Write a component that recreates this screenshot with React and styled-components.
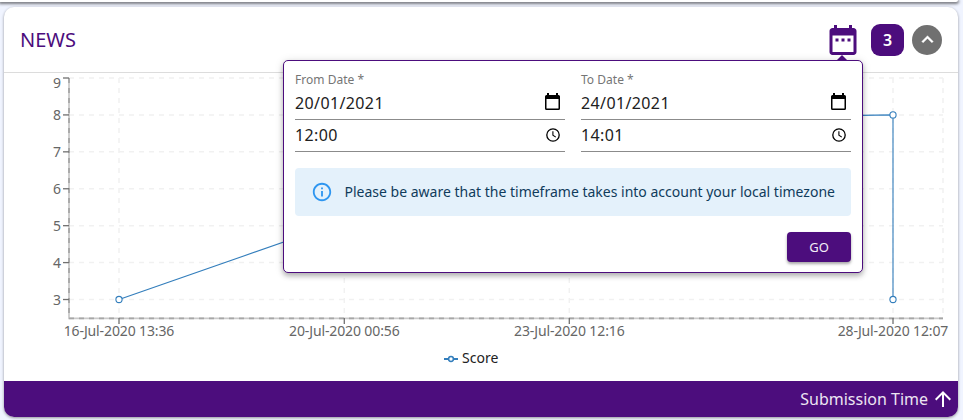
import React from "react";
import styled, { createGlobalStyle } from "styled-components";

const purple = "#4c0d7d";

const GlobalStyle = createGlobalStyle`
  * { box-sizing: border-box; }
  body {
    margin: 0;
    background: #f0f4ff;
    font-family: "Noto Sans", sans-serif;
    overflow: hidden;
  }
`;

const Page = styled.main`
  width: 963px;
  height: 420px;
  overflow: hidden;
  display: flex;
  flex-direction: column;
  gap: 5px;
`;

const PreviousCard = styled.div`
  flex: none;
  height: 2px;
  width: 958px;
  background: #fff;
  border-radius: 0 0 10px 0;
  box-shadow: 0 1px 3px 1px rgba(0, 0, 0, 0.5);
`;

const Card = styled.section`
  position: relative;
  width: 954px;
  height: 410px;
  margin-left: 4px;
  display: flex;
  flex-direction: column;
  background: #fff;
  border-radius: 10px;
  box-shadow: 0 1px 3px rgba(0, 0, 0, 0.4);
`;

const Header = styled.header`
  height: 66px;
  padding: 0 16px;
  display: flex;
  align-items: center;
  border-bottom: 1px solid #dcdcdc;
`;

const Title = styled.h2`
  flex: 1;
  margin: 0;
  color: ${purple};
  font-size: 20px;
  font-weight: 400;
  line-height: 28px;
`;

const Actions = styled.div`
  display: flex;
  align-items: center;
`;

const IconButton = styled.button`
  display: flex;
  padding: 0;
  margin-right: 10.5px;
  border: 0;
  background: none;
  color: ${purple};
`;

const Count = styled.span`
  width: 33px;
  height: 32px;
  margin-right: 8px;
  border-radius: 9px;
  background: ${purple};
  color: #fff;
  font-size: 16px;
  font-weight: 600;
  line-height: 33px;
  text-align: center;
`;

const CollapseButton = styled.button`
  display: flex;
  align-items: center;
  justify-content: center;
  width: 30px;
  height: 30px;
  padding: 0;
  border: 0;
  border-radius: 50%;
  background: #707070;
  color: #fff;
`;

const ChartSvg = styled.svg`
  display: block;
  flex: none;
  font-family: "Noto Sans", sans-serif;
  font-size: 14px;
`;

const DateTick = styled.text`
  letter-spacing: -0.12px;
`;

const Legend = styled.div`
  height: 36px;
  padding: 3px 0 0 440px;
  display: flex;
  align-items: flex-start;
  gap: 4px;
  color: #212121;
  font-size: 14px;
  line-height: 20px;
`;

const LegendMark = styled.svg`
  margin-top: 4px;
`;

const Footer = styled.footer`
  height: 36px;
  padding-right: 3px;
  display: flex;
  align-items: center;
  justify-content: flex-end;
  gap: 3px;
  border-radius: 0 0 10px 10px;
  background: ${purple};
  color: #ece4f2;
  font-size: 16px;
`;

const Popover = styled.div`
  position: absolute;
  left: 279px;
  top: 53px;
  width: 580px;
  height: 213px;
  padding: 10px 11px;
  display: flex;
  flex-direction: column;
  background: #fff;
  border: 1px solid ${purple};
  border-radius: 5px;
  box-shadow: 0 3px 5px rgba(0, 0, 0, 0.25), 0 1px 10px rgba(0, 0, 0, 0.12);

  &::before {
    content: "";
    position: absolute;
    left: 553px;
    top: -6px;
    border: 5px solid transparent;
    border-top: 0;
    border-bottom-color: ${purple};
  }
`;

const Fields = styled.div`
  display: grid;
  grid-template-columns: 1fr 1fr;
  column-gap: 16px;
`;

const Field = styled.div`
  display: flex;
  flex-direction: column;
`;

const Label = styled.span`
  height: 17px;
  color: #757575;
  font-size: 12px;
  line-height: 18px;
  letter-spacing: 0.02px;
`;

const Input = styled.div`
  height: 32px;
  padding: 0 4px 1px 0;
  display: flex;
  align-items: center;
  justify-content: space-between;
  border-bottom: 1px solid #8b8b8b;
  color: #212121;
  font-size: 16px;
  line-height: 30px;
  letter-spacing: ${(p) => p.$spacing};

  svg {
    margin-bottom: ${(p) => p.$iconLift};
  }
`;

const Notice = styled.div`
  height: 48px;
  margin-top: 16px;
  padding-left: 17px;
  display: flex;
  align-items: center;
  gap: 12.5px;
  border-radius: 4px;
  background: #e4f1fb;
  color: #103c5c;
  font-size: 14px;
  white-space: nowrap;
`;

const NoticeText = styled.span`
  padding-bottom: 2px;
`;

const GoButton = styled.button`
  align-self: flex-end;
  width: 64px;
  height: 30px;
  margin-top: 16px;
  padding: 0;
  border: 0;
  border-radius: 4px;
  background: ${purple};
  box-shadow: 0 2px 3px rgba(0, 0, 0, 0.35);
  color: #f3edf7;
  font: 400 13px "Noto Sans", sans-serif;
`;

const DateRangeIcon = () => (
  <svg width="36" height="36" viewBox="0 0 24 24" fill="currentColor">
    <path d="M7 11h2v2H7zm14-5v14c0 1.1-.9 2-2 2H5c-1.11 0-2-.9-2-2l.01-14c0-1.1.88-2 1.99-2h1V2h2v2h8V2h2v2h1c1.1 0 2 .9 2 2M5 20h14V9H5zm10-7h2v-2h-2zm-4 0h2v-2h-2z" />
  </svg>
);

const CalendarIcon = () => (
  <svg width="17" height="18" viewBox="0 0 17 18">
    <path
      fill="#000"
      fillRule="evenodd"
      d="M3 0h2v2h7V0h2v2h.5A1.5 1.5 0 0 1 16 3.5v12a1.5 1.5 0 0 1-1.5 1.5h-12A1.5 1.5 0 0 1 1 15.5v-12A1.5 1.5 0 0 1 2.5 2H3zM2.5 6v9.5h12V6z"
    />
  </svg>
);

const ClockIcon = () => (
  <svg width="16" height="16" viewBox="0 0 16 16" fill="none" stroke="#000">
    <circle cx="8" cy="8" r="6.2" strokeWidth="1.3" />
    <path d="M7.9 4.3v4l2.9 1.8" strokeWidth="1.1" />
  </svg>
);

const InfoIcon = () => (
  <svg width="20" height="20" viewBox="0 0 24 24" fill="#2e96f0">
    <path
      d="M11 7h2v2h-2zm0 4h2v6h-2zm1-9C6.48 2 2 6.48 2 12s4.48 10 10 10 10-4.48 10-10S17.52 2 12 2m0 18c-4.41 0-8-3.59-8-8s3.59-8 8-8 8 3.59 8 8-3.59 8-8 8"
      transform="translate(-1.2 -1.2) scale(1.1)"
    />
  </svg>
);

const yTicks = [9, 8, 7, 6, 5, 4, 3].map((value) => ({
  value,
  y: 78 + (9 - value) * 36.92,
}));

const xTicks = [
  { x: 119, label: "16-Jul-2020 13:36" },
  { x: 344.3, label: "20-Jul-2020 00:56" },
  { x: 569.3, label: "23-Jul-2020 12:16" },
  { x: 893, label: "28-Jul-2020 12:07" },
];

const points = [
  [119, 299.5],
  [893, 114.9],
  [893, 299.5],
];

function Chart() {
  return (
    <ChartSvg width="954" height="272" viewBox="4 73 954 272">
      <g stroke="#f1f1f1" strokeWidth="1.5" strokeDasharray="5 5">
        {yTicks.map((t) => (
          <line key={t.value} x1="69" x2="943" y1={t.y} y2={t.y} />
        ))}
        {[...xTicks.map((t) => t.x), 943].map((x) => (
          <line key={x} x1={x} x2={x} y1="78" y2="318" />
        ))}
      </g>
      <path d="M69 78V318.3H943" fill="none" stroke="#cacaca" strokeWidth="1.8" />
      <g stroke="#a6a6a6" strokeWidth="1.8" strokeDasharray="5 5">
        <line x1="69" y1="78" x2="69" y2="318" />
        <line x1="69" y1="318.3" x2="943" y2="318.3" />
      </g>
      {yTicks.map((t) => (
        <g key={t.value}>
          <line x1="63" x2="69" y1={t.y} y2={t.y} stroke="#707070" strokeWidth="1.3" />
          <text x="61" y={t.value === 9 ? 88 : t.y + 5} textAnchor="end" fill="#666">
            {t.value}
          </text>
        </g>
      ))}
      {xTicks.map((t) => (
        <g key={t.x}>
          <line x1={t.x} x2={t.x} y1="318" y2="324" stroke="#707070" strokeWidth="1.3" />
          <DateTick x={t.x} y="336" textAnchor="middle" fill="#666">
            {t.label}
          </DateTick>
        </g>
      ))}
      <g fill="none" stroke="#337ebc" strokeWidth="1.1">
        <path d="M119 299.5L344 221C560 135 720 115.5 893 114.9V299.5" />
        <g fill="#fff">
          {points.map(([x, y]) => (
            <circle key={`${x}-${y}`} cx={x} cy={y} r="3.1" />
          ))}
        </g>
      </g>
    </ChartSvg>
  );
}

function DateField({ label, date, time }) {
  return (
    <Field>
      <Label>{label}</Label>
      <Input $spacing="0.38px" $iconLift="2px">
        {date}
        <CalendarIcon />
      </Input>
      <Input $spacing="0.35px" $iconLift="1px">
        {time}
        <ClockIcon />
      </Input>
    </Field>
  );
}

export default function App() {
  return (
    <Page>
      <GlobalStyle />
      <PreviousCard />
      <Card>
        <Header>
          <Title>NEWS</Title>
          <Actions>
            <IconButton aria-label="Select dates">
              <DateRangeIcon />
            </IconButton>
            <Count>3</Count>
            <CollapseButton aria-label="Collapse">
              <svg width="23" height="23" viewBox="0 0 24 24" fill="currentColor">
                <path d="m12 8-6 6 1.41 1.41L12 10.83l4.59 4.58L18 14z" stroke="currentColor" strokeWidth="0.4" />
              </svg>
            </CollapseButton>
          </Actions>
        </Header>
        <Chart />
        <Legend>
          <LegendMark width="14" height="14" viewBox="0 0 14 14" fill="none" stroke="#337ebc">
            <path d="M0 7h4.5M9.5 7H14" strokeWidth="1.8" />
            <circle cx="7" cy="7" r="2.4" strokeWidth="1.5" />
          </LegendMark>
          Score
        </Legend>
        <Footer>
          Submission Time
          <svg width="24" height="24" viewBox="0 0 24 24" fill="#fff">
            <path d="m4 12 1.41 1.41L11 7.83V20h2V7.83l5.58 5.59L20 12l-8-8z" />
          </svg>
        </Footer>
        <Popover>
          <Fields>
            <DateField label="From Date *" date="20/01/2021" time="12:00" />
            <DateField label="To Date *" date="24/01/2021" time="14:01" />
          </Fields>
          <Notice>
            <InfoIcon />
            <NoticeText>
              Please be aware that the timeframe takes into account your local timezone
            </NoticeText>
          </Notice>
          <GoButton>GO</GoButton>
        </Popover>
      </Card>
    </Page>
  );
}
